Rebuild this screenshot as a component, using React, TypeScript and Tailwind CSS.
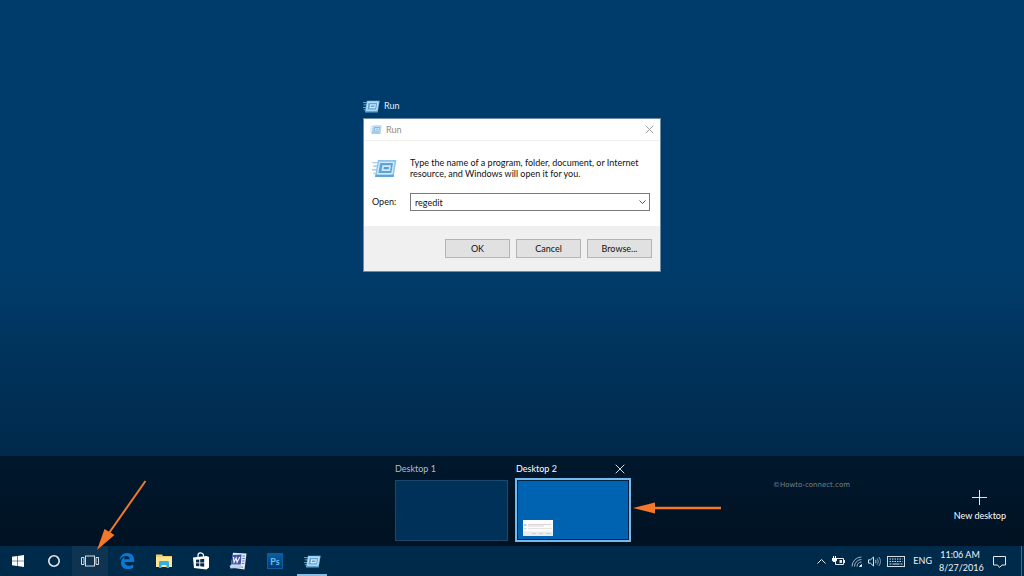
import { useState } from "react";
import type { ReactNode } from "react";
import { clsx } from "clsx";

interface IconProps {
  className?: string;
}

function RunIcon({ className }: IconProps) {
  return (
    <svg viewBox="0 0 26 20" className={className} aria-hidden="true">
      <path d="M0 4h6M1 7.500h5M0 11.500h5M1 15h3" stroke="#8fc4e8" strokeWidth="1.200" />
      <path d="M6 1H25.500L22.500 19H3z" fill="#8cc3ea" />
      <path d="M3 19 3.600 16.500H23L22.500 19z" fill="#5fa3d6" />
      <path d="M7.800 3.500H22.800L20.800 15.500H5.800z" fill="#5ba5dc" stroke="#d4ebfa" strokeWidth="1.400" />
      <path d="M10.800 6.500h9l-1 6h-9z" fill="#d3e9f8" />
      <path d="M12.300 8.500h5.500l-.4 2.200h-5.500z" fill="#5a9fd6" />
    </svg>
  );
}

function WindowsIcon() {
  return (
    <svg viewBox="0 0 12 12" className="size-3" fill="#fff" aria-hidden="true">
      <path d="M0 1.700 5 1v4.700H0zM5.600.9 12 0v5.700H5.600zM0 6.300h5V11l-5-.7zM5.600 6.300H12V12l-6.400-.9z" />
    </svg>
  );
}

function CortanaIcon() {
  return (
    <svg viewBox="0 0 14 14" className="size-3.5" aria-hidden="true">
      <circle cx="7" cy="7" r="5.200" fill="none" stroke="#e4eaf0" strokeWidth="1.600" />
    </svg>
  );
}

function TaskViewIcon() {
  return (
    <svg viewBox="0 0 18 12" className="h-3 w-[18px]" fill="none" stroke="#d3dbe3" aria-hidden="true">
      <rect x="4.500" y="1" width="9" height="10" />
      <path d="M3 2.500H.5v7H3zM15 2.500h2.500v7H15z" />
    </svg>
  );
}

function EdgeIcon() {
  return (
    <svg viewBox="0 0 16 16" className="size-4" aria-hidden="true">
      <path
        d="M.6 7.200C1.200 2.800 4.200 0 8.200 0c4.400 0 7 3.100 7 7.300v1.800H5.400c.1 2.500 2.200 3.600 4.400 3.600 1.700 0 3.100-.5 4.500-1.300v3.300c-1.500.9-3.300 1.300-5.300 1.300C4.800 16 2 13.600 2 9.900c0-2.900 1.600-5 4-6.100-.6.7-.9 1.600-.9 2.500h5.500c0-2-1-3.200-3.400-3.200C4.600 3.100 2.200 4.700.6 7.200z"
        fill="#0a78d6"
      />
    </svg>
  );
}

function ExplorerIcon() {
  return (
    <svg viewBox="0 0 16 14" className="h-3.5 w-4" aria-hidden="true">
      <path d="M0 .5h6l1 1.500h9V13H0z" fill="#f3cf66" />
      <path d="M0 3h16v10H0z" fill="#ffe594" />
      <path d="M3 14V8.500C3 7.700 3.500 7 4.300 7h7.400c.8 0 1.300.7 1.300 1.500V14h-2.500v-3h-5v3z" fill="#35aee2" />
    </svg>
  );
}

function StoreIcon() {
  return (
    <svg viewBox="0 0 16 18" className="h-[18px] w-4" aria-hidden="true">
      <path d="M5 6V3.200C5 1.800 6 .8 7.300.8S10.500 1.800 10.500 3.200V5" fill="none" stroke="#fff" strokeWidth="1.200" />
      <path d="M0 5.500 13.500 4 16 5v10.500L13.500 17.500 1 16z" fill="#fff" />
      <path d="M3 7.800 6.300 7.400v3H3zM7.200 7.300l4-.5v3.600h-4zM3 11.200h3.300v3L3 13.900zM7.200 11.200h4v3.500l-4-.4z" fill="#052c4c" />
    </svg>
  );
}

function WordIcon() {
  return (
    <svg viewBox="0 0 18 18" className="size-[18px]" aria-hidden="true">
      <path d="M4 .8 17.500 1.500 15.500 17.500 1.500 15.500z" fill="#e4eaf6" />
      <path d="M13.500 4h2.500M13.500 6.500h2.300M13.200 9h2.300M12.800 11.500h2.300M5 14.500l9 .7" stroke="#5f76b4" strokeWidth="1" />
      <path d="M3.500 3 12.500 2.500 11.800 12.500 2 12.500z" fill="#3f55ab" />
      <path d="M4.500 5l.6 5.200L7.200 6l.9 4.200L10.800 5" fill="none" stroke="#eef2fb" strokeWidth="1.200" />
      <path d="M.5 13.500 12 13l1 2.500L1.500 16.500z" fill="#c3cee8" />
    </svg>
  );
}

function BatteryIcon() {
  return (
    <svg viewBox="0 0 13 10" className="h-2.5 w-[13px]" fill="none" stroke="#e3e9ee" aria-hidden="true">
      <path d="M5 2.500h6.500v6H3.500V6" />
      <path d="M7.500 4h2.500v3H7.500z" fill="#e3e9ee" stroke="none" />
      <path d="M12.500 4v3" />
      <path d="M0 2h5v2.500L3.500 6h-2L0 4.500zM1 0h1v2H1zM3 0h1v2H3z" fill="#fff" stroke="none" />
    </svg>
  );
}

function WifiIcon() {
  return (
    <svg viewBox="0 0 11 11" className="size-[11px]" fill="none" stroke="#9fb0c0" aria-hidden="true">
      <path d="M1 10.500A9.500 9.500 0 0 1 10.500 1M3.500 10.500a7 7 0 0 1 7-7M6 10.500A4.500 4.500 0 0 1 10.500 6" />
      <path d="M8.500 10.500 10.500 8.500v2z" fill="#e3e9ee" stroke="#e3e9ee" />
    </svg>
  );
}

function VolumeIcon() {
  return (
    <svg viewBox="0 0 13 11" className="h-[11px] w-[13px]" fill="none" stroke="#dbe3ea" aria-hidden="true">
      <path d="M.5 3.800H2.500L5.500 1v9L2.500 7.200h-2z" />
      <path d="M7.300 3.700c.8 1 .8 2.600 0 3.600" />
      <path d="M9 2.300c1.600 1.800 1.600 4.600 0 6.400M10.800 1c2.200 2.600 2.200 6.400 0 9" stroke="#8fa3b5" />
    </svg>
  );
}

function KeyboardIcon() {
  return (
    <svg viewBox="0 0 18 11" className="h-[11px] w-[18px]" fill="none" stroke="#d5dde4" aria-hidden="true">
      <rect x=".5" y=".5" width="17" height="10" />
      <path d="M2.500 3h13M2.500 5.500h13" strokeDasharray="1.500 1" />
      <path d="M2.500 8h2M5.500 8h7M13.500 8h2" />
    </svg>
  );
}

function ActionCenterIcon() {
  return (
    <svg viewBox="0 0 13 13" className="size-[13px]" fill="none" stroke="#e3e9ee" aria-hidden="true">
      <path d="M.5 1.500h12v8.500H9L6.500 12.500 4.500 10h-4z" />
    </svg>
  );
}

function CloseIcon({ className }: IconProps) {
  return (
    <svg viewBox="0 0 10 10" className={className} fill="none" stroke="currentColor" aria-hidden="true">
      <path d="m.7.7 8.600 8.600M9.300.7.7 9.300" />
    </svg>
  );
}

function Arrow({ className }: IconProps) {
  return (
    <svg viewBox="0 0 88 12" className={className} aria-hidden="true">
      <path d="M20 6h68" stroke="#f4782a" strokeWidth="2.400" />
      <path d="M0 6 22 .5v11z" fill="#f4782a" />
    </svg>
  );
}

function RunDialog() {
  const [command, setCommand] = useState("regedit");
  const buttonClass =
    "h-[19px] w-[65px] border border-[#b4b4b4] bg-[#e1e1e1] text-center leading-none text-[#111]";

  return (
    <section className="flex flex-col gap-1" aria-label="Run">
      <div className="flex h-4 items-center gap-1 text-[9px] text-[#e4ebf1]">
        <RunIcon className="h-[13px] w-[17px]" />
        Run
      </div>

      <form
        className="w-[298px] border border-[#6f8ba3] bg-white text-[9px] text-[#111]"
        onSubmit={(e) => e.preventDefault()}
      >
        {/* Title bar */}
        <div className="flex h-[22px] items-center gap-1 border-b border-[#eeeeee] px-1.5 text-[#8c8c8c]">
          <RunIcon className="h-[9px] w-3 opacity-80" />
          <span className="flex-1">Run</span>
          <button type="button" aria-label="Close" className="text-[#999]">
            <CloseIcon className="size-[9px]" />
          </button>
        </div>

        <div className="flex h-[85px] flex-col gap-3.5 pt-4 pr-2.5 pl-2">
          <div className="flex items-center">
            <div className="w-[38px]">
              <RunIcon className="h-[19px] w-[25px]" />
            </div>
            <p className="flex-1 leading-[11px]">
              Type the name of a program, folder, document, or Internet
              <br />
              resource, and Windows will open it for you.
            </p>
          </div>
          <div className="flex items-center">
            <label htmlFor="command" className="w-[38px]">
              Open:
            </label>
            <div className="flex h-[18px] flex-1 items-center border border-[#7a7a7a] pr-[3px] pl-1">
              <input
                id="command"
                className="h-full min-w-0 flex-1 bg-transparent outline-none"
                value={command}
                onChange={(e) => setCommand(e.target.value)}
              />
              <button type="button" aria-label="Recent commands">
                <svg viewBox="0 0 7 4" className="h-1 w-[7px]" fill="none" stroke="#555" aria-hidden="true">
                  <path d="m.5.5 3 3 3-3" />
                </svg>
              </button>
            </div>
          </div>
        </div>

        <div className="flex h-[45px] items-center justify-end gap-1.5 bg-[#f0f0f0] pr-2">
          <button type="submit" className={buttonClass}>
            OK
          </button>
          <button type="button" className={buttonClass}>
            Cancel
          </button>
          <button type="button" className={buttonClass}>
            Browse...
          </button>
        </div>
      </form>
    </section>
  );
}

// Tiny preview of the Run dialog shown inside the desktop thumbnail
function DialogPreview() {
  return (
    <svg viewBox="0 0 30 16" className="h-4 w-[30px]" aria-hidden="true">
      <path d="M0 0h30v16H0z" fill="#fdfdfd" />
      <path d="M0 11.500h30V16H0z" fill="#ececec" />
      <path d="M5 4.500h23M5 6h16" stroke="#d2caca" strokeWidth=".8" />
      <path d="M5 8.500h24" stroke="#d4d4d4" strokeWidth=".6" />
      <path d="M1 5h2.500" stroke="#8fc0e6" strokeWidth="1.500" />
      <path d="M1 8.500h2.500M9 13.500h4M16 13.500h4M23 13.500h5" stroke="#c8c8c8" strokeWidth=".8" />
    </svg>
  );
}

function DesktopStrip() {
  return (
    <section
      aria-label="Virtual desktops"
      className="grid h-[90px] grid-cols-[1fr_auto_1fr] bg-linear-to-b from-[#00182d] to-[#001222] text-[9px]"
    >
      <div />
      <div className="flex gap-[7px] pt-1 pl-[2px]">
        <div className="flex flex-col">
          <div className="flex h-[18px] items-center text-[#b3bdc6]">Desktop 1</div>
          <button
            aria-label="Switch to Desktop 1"
            className="mt-[2px] h-[61px] w-[113px] border border-[#1d486b] bg-[#003259]"
          />
        </div>
        <div className="flex flex-col">
          <div className="flex h-[18px] items-center justify-between pr-1.5 pl-px text-white">
            Desktop 2
            <button aria-label="Close Desktop 2" className="text-[#d5dce2]">
              <CloseIcon className="size-2.5" />
            </button>
          </div>
          <div className="relative">
            <button
              aria-label="Switch to Desktop 2"
              className="flex h-16 w-[116px] items-end border-2 border-[#76b9ed] bg-[#0063b1] p-1 pl-1.5 inset-ring inset-ring-[#00213d]"
            >
              <DialogPreview />
            </button>
            <Arrow className="absolute top-6 left-full ml-[2px] h-3 w-[88px]" />
          </div>
        </div>
      </div>
      <div className="flex justify-between pr-[18px] pl-[142px]">
        <span className="pt-[23px] font-['DejaVu_Sans',sans-serif] text-[7px] leading-3 text-[#77838e]">
          ©Howto-connect.com
        </span>
        <button className="flex flex-col items-center gap-1 self-start pt-[34px] text-white">
          <svg viewBox="0 0 15 15" className="size-[15px]" stroke="#e1e6ea" aria-hidden="true">
            <path d="M7.500 0v15M0 7.500h15" />
          </svg>
          New desktop
        </button>
      </div>
    </section>
  );
}

interface TaskbarButtonProps {
  label: string;
  active?: boolean;
  running?: boolean;
  children: ReactNode;
}

function TaskbarButton({ label, active, running, children }: TaskbarButtonProps) {
  return (
    <button
      aria-label={label}
      className={clsx("relative flex h-full w-9 items-center justify-center", active && "bg-[#0f3452]")}
    >
      {children}
      {running && <span className="absolute inset-x-[3px] bottom-0 h-[2px] bg-[#86bde6]" />}
    </button>
  );
}

function Taskbar() {
  return (
    <footer className="relative flex h-[30px] items-center justify-between bg-[#002a4a] text-[9px] text-[#f0f3f6]">
      <nav className="flex h-full" aria-label="Taskbar">
        <TaskbarButton label="Start">
          <WindowsIcon />
        </TaskbarButton>
        <TaskbarButton label="Cortana">
          <CortanaIcon />
        </TaskbarButton>
        <TaskbarButton label="Task View" active>
          <TaskViewIcon />
        </TaskbarButton>
        <div className="ml-px flex h-full gap-px">
          <TaskbarButton label="Microsoft Edge">
            <EdgeIcon />
          </TaskbarButton>
          <TaskbarButton label="File Explorer">
            <ExplorerIcon />
          </TaskbarButton>
          <TaskbarButton label="Store">
            <StoreIcon />
          </TaskbarButton>
          <TaskbarButton label="Word">
            <WordIcon />
          </TaskbarButton>
          <TaskbarButton label="Photoshop">
            <span className="flex size-4 items-center justify-center border border-[#0a5fa3] bg-linear-to-b from-[#0c5d9f] to-[#063a70] text-[9px] leading-none font-bold text-[#5fc4f5]">
              Ps
            </span>
          </TaskbarButton>
          <TaskbarButton label="Run" running>
            <RunIcon className="h-[13px] w-[17px]" />
          </TaskbarButton>
        </div>
      </nav>

      <div className="flex h-full items-center">
        <div className="flex items-center gap-[6px]">
          <button aria-label="Show hidden icons">
            <svg viewBox="0 0 9 5" className="h-[5px] w-[9px]" fill="none" stroke="#e6ebf0" aria-hidden="true">
              <path d="m.5 4.500 4-4 4 4" />
            </svg>
          </button>
          <BatteryIcon />
          <WifiIcon />
          <VolumeIcon />
          <KeyboardIcon />
        </div>
        <span className="ml-2">ENG</span>
        <time className="ml-[7px] flex w-[42px] flex-col text-center leading-[13px]">
          <span>11:06 AM</span>
          <span>8/27/2016</span>
        </time>
        <button aria-label="Action center" className="mx-3">
          <ActionCenterIcon />
        </button>
        <div className="mr-[2px] ml-[3px] h-full w-px bg-[#4a6a84]" />
      </div>

      {/* Pointer to the Task View button */}
      <svg viewBox="0 0 52 72" className="absolute bottom-[25px] left-[95px] h-[72px] w-[52px]" aria-hidden="true">
        <path d="M50.500 2 14 54" stroke="#f4782a" strokeWidth="2" />
        <path d="M2 71 9.500 50l10 6z" fill="#f4782a" />
      </svg>
    </footer>
  );
}

export default function App() {
  return (
    <div className="flex min-h-screen flex-col bg-[#00294a] font-['Lato','Open_Sans',sans-serif]">
      <main className="flex flex-1 items-start justify-center bg-linear-to-b from-[#003c6b] from-60% to-[#00294a] pt-[98px]">
        <RunDialog />
      </main>
      <DesktopStrip />
      <Taskbar />
    </div>
  );
}
